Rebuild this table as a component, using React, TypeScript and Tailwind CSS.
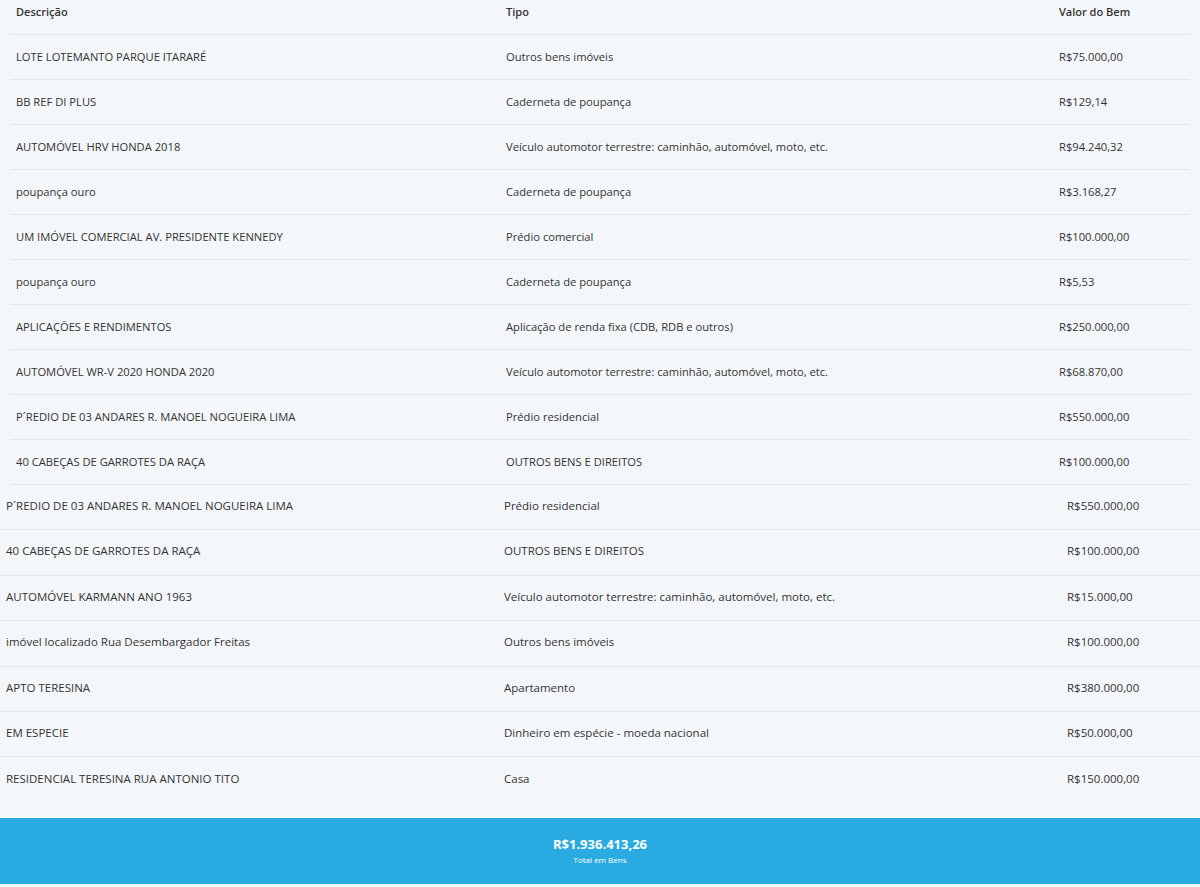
type Bem = {
  descricao: string;
  tipo: string;
  valor: string;
};

const bensDeclarados: Bem[] = [
  { descricao: "LOTE LOTEMANTO PARQUE ITARARÉ", tipo: "Outros bens imóveis", valor: "R$75.000,00" },
  { descricao: "BB REF DI PLUS", tipo: "Caderneta de poupança", valor: "R$129,14" },
  { descricao: "AUTOMÓVEL HRV HONDA 2018", tipo: "Veículo automotor terrestre: caminhão, automóvel, moto, etc.", valor: "R$94.240,32" },
  { descricao: "poupança ouro", tipo: "Caderneta de poupança", valor: "R$3.168,27" },
  { descricao: "UM IMÓVEL COMERCIAL AV. PRESIDENTE KENNEDY", tipo: "Prédio comercial", valor: "R$100.000,00" },
  { descricao: "poupança ouro", tipo: "Caderneta de poupança", valor: "R$5,53" },
  { descricao: "APLICAÇÕES E RENDIMENTOS", tipo: "Aplicação de renda fixa (CDB, RDB e outros)", valor: "R$250.000,00" },
  { descricao: "AUTOMÓVEL WR-V 2020 HONDA 2020", tipo: "Veículo automotor terrestre: caminhão, automóvel, moto, etc.", valor: "R$68.870,00" },
  { descricao: "P´REDIO DE 03 ANDARES R. MANOEL NOGUEIRA LIMA", tipo: "Prédio residencial", valor: "R$550.000,00" },
  { descricao: "40 CABEÇAS DE GARROTES DA RAÇA", tipo: "OUTROS BENS E DIREITOS", valor: "R$100.000,00" },
];

const outrosBens: Bem[] = [
  { descricao: "P´REDIO DE 03 ANDARES R. MANOEL NOGUEIRA LIMA", tipo: "Prédio residencial", valor: "R$550.000,00" },
  { descricao: "40 CABEÇAS DE GARROTES DA RAÇA", tipo: "OUTROS BENS E DIREITOS", valor: "R$100.000,00" },
  { descricao: "AUTOMÓVEL KARMANN ANO 1963", tipo: "Veículo automotor terrestre: caminhão, automóvel, moto, etc.", valor: "R$15.000,00" },
  { descricao: "imóvel localizado Rua Desembargador Freitas", tipo: "Outros bens imóveis", valor: "R$100.000,00" },
  { descricao: "APTO TERESINA", tipo: "Apartamento", valor: "R$380.000,00" },
  { descricao: "EM ESPECIE", tipo: "Dinheiro em espécie - moeda nacional", valor: "R$50.000,00" },
  { descricao: "RESIDENCIAL TERESINA RUA ANTONIO TITO", tipo: "Casa", valor: "R$150.000,00" },
];

export default function App() {
  return (
    <div className="min-h-[887px] bg-[#f4f7fa] pb-[5px] font-['Open_Sans',sans-serif] text-[11px] text-[#333]">
      {/* tabela principal */}
      <div className="mx-[10px]">
        <div className="grid h-[35px] grid-cols-[490px_553px_1fr] border-b border-[#e1e6eb] pt-[4px] font-semibold">
          <div className="px-[6px]">Descrição</div>
          <div className="px-[6px]">Tipo</div>
          <div className="px-[6px]">Valor do Bem</div>
        </div>
        {bensDeclarados.map((b, i) => (
          <div
            key={i}
            className="grid h-[45px] grid-cols-[490px_553px_1fr] items-center border-b border-[#e1e6eb] text-[11.2px]"
          >
            <div className="px-[6px]">{b.descricao}</div>
            <div className="px-[6px]">{b.tipo}</div>
            <div className="px-[6px]">{b.valor}</div>
          </div>
        ))}
      </div>

      {/* demais bens */}
      <div className="divide-y divide-[#e1e6eb] text-[11.5px]">
        {outrosBens.map((b, i) => (
          <div
            key={i}
            className="grid h-[45.4px] grid-cols-[498px_563px_1fr] items-center pb-[3px]"
          >
            <div className="px-[6px]">{b.descricao}</div>
            <div className="px-[6px]">{b.tipo}</div>
            <div className="px-[6px]">{b.valor}</div>
          </div>
        ))}
      </div>

      {/* total */}
      <div className="mt-[15px] flex h-[66px] flex-col items-center justify-center bg-[#29abe2] text-white">
        <div className="text-[13px] font-bold leading-[17px]">R$1.936.413,26</div>
        <div className="mt-[1px] text-[8px] leading-[11px]">Total em Bens</div>
      </div>
    </div>
  );
}
